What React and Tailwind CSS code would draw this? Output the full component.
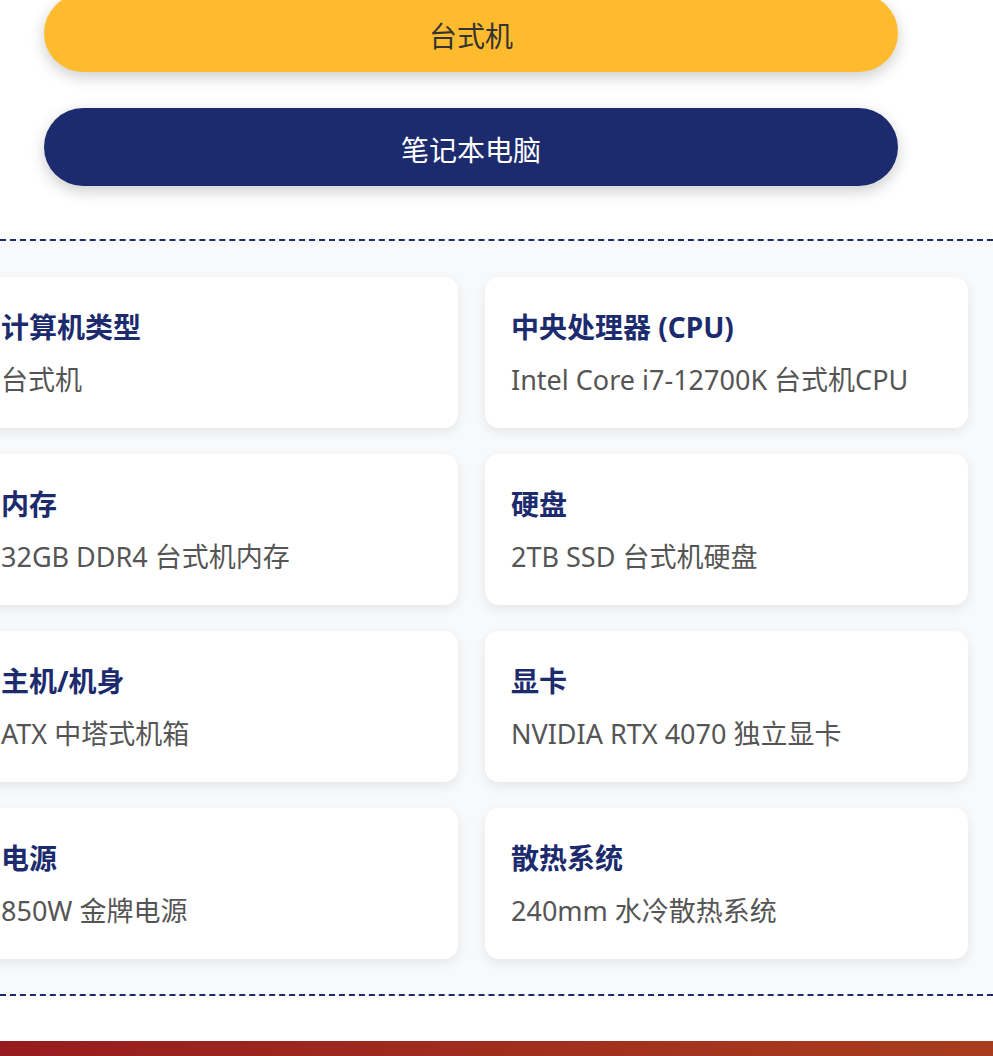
import React from "react";

const specs = [
  ["计算机类型", "台式机"],
  ["中央处理器 (CPU)", "Intel Core i7-12700K 台式机CPU"],
  ["内存", "32GB DDR4 台式机内存"],
  ["硬盘", "2TB SSD 台式机硬盘"],
  ["主机/机身", "ATX 中塔式机箱"],
  ["显卡", "NVIDIA RTX 4070 独立显卡"],
  ["电源", "850W 金牌电源"],
  ["散热系统", "240mm 水冷散热系统"],
];

export default function App() {
  return (
    <div
      className="w-full overflow-hidden bg-white"
      style={{ fontFamily: '"Noto Sans", "Noto Sans CJK SC", sans-serif' }}
    >
      <div className="flex flex-col gap-[36px] pl-[44px] pr-[95px] mt-[-6px]">
        <button
          className="h-[78px] w-full rounded-full bg-[#febb2e] text-[#333333] text-[28px] shadow-[0_5px_15px_rgba(0,0,0,0.2)] pt-[4px]"
          style={{ fontFamily: '"Noto Sans CJK SC", sans-serif' }}
        >
          台式机
        </button>
        <button
          className="h-[78px] w-full rounded-full bg-[#1c2b6d] text-white text-[28px] shadow-[0_5px_15px_rgba(0,0,0,0.2)] pt-[4px]"
          style={{ fontFamily: '"Noto Sans CJK SC", sans-serif' }}
        >
          笔记本电脑
        </button>
      </div>

      <div className="mt-[53px] border-y-2 border-dashed border-[#1c2b6d] bg-[#f8f9fa] pt-[36px] pb-[35px]">
        <div className="ml-[-25px] mr-[25px] grid grid-cols-2 gap-x-[27px] gap-y-[26px]">
          {specs.map(([t, v]) => (
            <div
              key={t}
              className="h-[151px] rounded-[14px] bg-white pl-[26px] pr-[20px] pt-[30px] shadow-[0_4px_12px_rgba(0,0,0,0.08)]"
            >
              <div className="text-[28px] leading-[40px] font-bold text-[#1c2b6d] whitespace-nowrap">
                {t}
              </div>
              <div className="mt-[13px] text-[27px] leading-[40px] text-[#555555] whitespace-nowrap">
                {v}
              </div>
            </div>
          ))}
        </div>
      </div>

      <div className="h-[45px] bg-white" />
      <div className="h-[40px] bg-gradient-to-r from-[#971b1e] to-[#a83d1d]" />
    </div>
  );
}
